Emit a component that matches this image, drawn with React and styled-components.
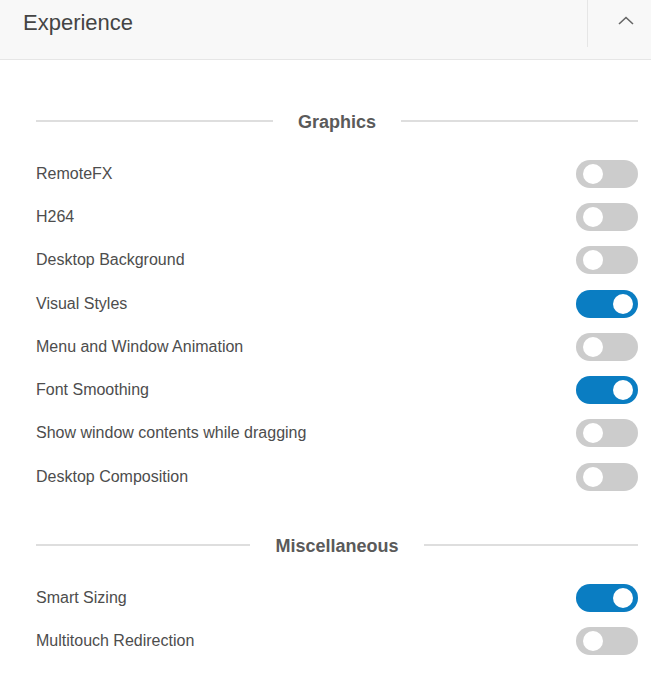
import { useState } from "react";
import styled, { createGlobalStyle } from "styled-components";

const GlobalStyle = createGlobalStyle`
  * { box-sizing: border-box; }
  body {
    margin: 0;
    background: #fff;
    font-family: "Liberation Sans", Arial, sans-serif;
  }
`;

const Panel = styled.div`
  width: 651px;
  background: #fff;
`;

const Header = styled.div`
  height: 60px;
  display: flex;
  align-items: flex-start;
  background-color: #f8f8f8;
  border-bottom: 1px solid #e6e6e6;
`;

const Title = styled.h2`
  flex: 1;
  margin: 0;
  padding: 10px 0 0 23px;
  font-size: 22px;
  font-weight: 400;
  color: #444;
`;

const CollapseButton = styled.button`
  width: 64px;
  height: 47px;
  display: flex;
  align-items: center;
  justify-content: center;
  padding: 0 0 6px 13px;
  background: none;
  border: none;
  border-left: 1px solid #e6e6e6;
  cursor: pointer;
`;

const Body = styled.div`
  padding: 50px 13px 20px 36px;
`;

const SectionTitle = styled.div`
  display: flex;
  align-items: center;
  gap: 25px;
  height: 24px;
  margin: ${(p) => (p.$first ? "0" : "36px")} 0 18px;
  font-size: 18px;
  font-weight: 700;
  color: #5a5a5a;

  &::before,
  &::after {
    content: "";
    flex: 1;
    height: 2px;
    margin-top: -3px;
    background: #dedede;
  }
`;

const Row = styled.div`
  height: 43.3px;
  display: flex;
  align-items: center;
  justify-content: space-between;
  font-size: 16px;
  color: #4d4d4d;
`;

const Switch = styled.button`
  position: relative;
  width: 62px;
  height: 28px;
  padding: 0;
  border: none;
  border-radius: 14px;
  background-color: ${(p) => (p.$on ? "#0a7dc2" : "#cccccc")};
  cursor: pointer;
  transition: background-color 0.2s ease;

  &::after {
    content: "";
    position: absolute;
    top: 4px;
    left: ${(p) => (p.$on ? "37px" : "7px")};
    width: 20px;
    height: 20px;
    border-radius: 50%;
    background: #fff;
    transition: left 0.2s ease;
  }
`;

const sections = [
  {
    title: "Graphics",
    items: [
      ["RemoteFX", false],
      ["H264", false],
      ["Desktop Background", false],
      ["Visual Styles", true],
      ["Menu and Window Animation", false],
      ["Font Smoothing", true],
      ["Show window contents while dragging", false],
      ["Desktop Composition", false],
    ],
  },
  {
    title: "Miscellaneous",
    items: [
      ["Smart Sizing", true],
      ["Multitouch Redirection", false],
    ],
  },
];

function Toggle({ initial }) {
  const [on, setOn] = useState(initial);
  return <Switch $on={on} onClick={() => setOn(!on)} aria-pressed={on} />;
}

export default function App() {
  return (
    <>
      <GlobalStyle />
      <Panel>
        <Header>
          <Title>Experience</Title>
          <CollapseButton>
            <svg width="16" height="9" viewBox="0 0 16 9">
              <path
                d="M1 8 L8 1.5 L15 8"
                fill="none"
                stroke="#666"
                strokeWidth="1.6"
              />
            </svg>
          </CollapseButton>
        </Header>
        <Body>
          {sections.map((section, i) => (
            <div key={section.title}>
              <SectionTitle $first={i === 0}>{section.title}</SectionTitle>
              {section.items.map(([label, on]) => (
                <Row key={label}>
                  <span>{label}</span>
                  <Toggle initial={on} />
                </Row>
              ))}
            </div>
          ))}
        </Body>
      </Panel>
    </>
  );
}
